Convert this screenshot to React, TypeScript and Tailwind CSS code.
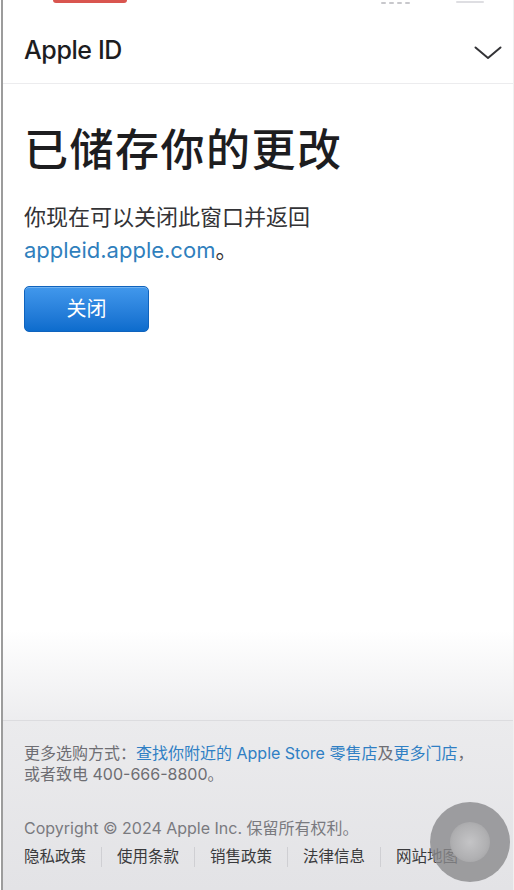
import { useState } from 'react';

const font = { fontFamily: 'Inter, "Noto Sans CJK SC", sans-serif' };

const footerLinks = ['隐私政策', '使用条款', '销售政策', '法律信息', '网站地图'];

function Chevron() {
  return (
    <svg width="28" height="14" viewBox="0 0 28 14" fill="none">
      <path d="M1.5 1.5 L14 12 L26.5 1.5" stroke="#333336" strokeWidth="2" strokeLinecap="round" strokeLinejoin="round" />
    </svg>
  );
}

export default function App() {
  const [open, setOpen] = useState(false);

  return (
    <div className="relative h-screen w-full overflow-hidden bg-white" style={font}>
      <div className="ml-px flex h-full flex-col border-l-2 border-r border-l-[#9c9c9c] border-r-[#f0f0f0]">
        {/* status strip */}
        <div className="flex h-[18px] items-start">
          <div className="ml-[50px] h-[3px] w-[74px] rounded-b-full bg-[#d9554f]" />
          <div className="ml-[254px] mt-[2px] flex gap-[3px]">
            <span className="h-[2px] w-[5px] rounded-full bg-[#c8c8cc]" />
            <span className="h-[2px] w-[5px] rounded-full bg-[#c8c8cc]" />
            <span className="h-[2px] w-[5px] rounded-full bg-[#c8c8cc]" />
            <span className="h-[2px] w-[5px] rounded-full bg-[#c8c8cc]" />
          </div>
          <div className="ml-[46px] mt-[1px] h-[2px] w-[28px] rounded-full bg-[#dedee2]" />
        </div>

        {/* header */}
        <header className="flex h-[66px] items-center justify-between border-b border-[#ececee] pl-[21px] pr-[11px]">
          <span className="text-[25px] font-medium tracking-[-0.4px] text-[#1d1d1f]">Apple ID</span>
          <button onClick={() => setOpen(!open)} className="mt-[4px] p-0">
            <Chevron />
          </button>
        </header>

        {/* content */}
        <main className="flex-1 px-[21px] pt-[40px]">
          <h1 className="text-[44px] font-medium leading-[53px] tracking-[1.5px] text-[#1d1d1f]">已储存你的更改</h1>
          <p className="mt-[24px] text-[22px] leading-[33px] text-[#333336]">
            你现在可以关闭此窗口并返回
            <br />
            <a href="#" className="text-[#2f7fbd]">appleid.apple.com</a>。
          </p>
          <button className="mt-[19px] flex h-[46px] w-[125px] items-center justify-center rounded-[5px] border border-[#0f63bd] bg-gradient-to-b from-[#4198ec] to-[#0c6ccd] text-[20px] text-white shadow-[inset_0_1px_0_rgba(255,255,255,0.25)]">
            关闭
          </button>
        </main>

        <div className="h-[90px] bg-gradient-to-b from-white to-[#ededef]" />

        {/* footer */}
        <footer className="border-t border-[#dcdcdf] bg-gradient-to-b from-[#ebebed] to-[#e3e3e6] px-[21px] pb-[23px] pt-[22px] text-[15.5px] leading-[21px]">
          <p className="text-[16px] text-[#6e6e73]">
            更多选购方式：<a href="#" className="text-[#2f7fc4]">查找你附近的 Apple Store 零售店</a>及<a href="#" className="text-[#2f7fc4]">更多门店</a>，
            <br />
            或者致电 400-666-8800。
          </p>
          <p className="mt-[33px] text-[16px] text-[#7a7a7f]">Copyright © 2024 Apple Inc. 保留所有权利。</p>
          <nav className="mt-[7px] flex items-center text-[#3a3a3c]">
            {footerLinks.map((l, i) => (
              <span key={l} className="flex items-center">
                {i > 0 && <span className="mx-[15px] h-[20px] w-px bg-[#cfcfd3]" />}
                <a href="#">{l}</a>
              </span>
            ))}
          </nav>
        </footer>
      </div>

      {/* assistive touch */}
      <div className="absolute left-[430px] top-[802px] flex h-[80px] w-[80px] items-center justify-center rounded-full bg-[#8a8a8c]/80">
        <div className="h-[40px] w-[40px] rounded-full bg-[radial-gradient(circle,#c4c4c6_0%,#b0b0b2_60%,#9a9a9c_100%)]" />
      </div>
    </div>
  );
}
